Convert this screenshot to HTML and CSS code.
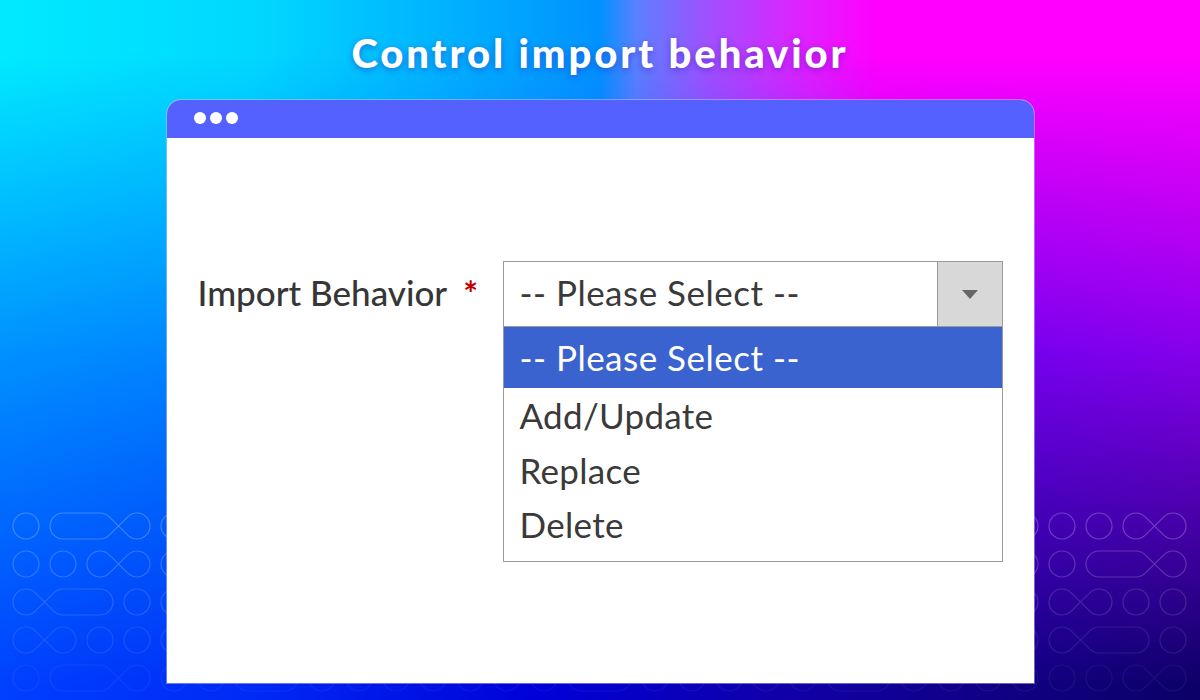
FILE: index.html
```html
<!DOCTYPE html>
<html lang="en">
<head>
<meta charset="utf-8">
<title>Control import behavior</title>
<link rel="stylesheet" href="styles.css">
</head>
<body>
<svg class="pattern" width="1200" height="700" viewBox="0 0 1200 700" aria-hidden="true">
  <defs>
    <circle id="o" r="13"/>
    <path id="inf" d="M9.19,-9.19 L27.81,9.19 A13,13 0 1 0 27.81,-9.19 L9.19,9.19 A13,13 0 1 1 9.19,-9.19 Z"/>
    <path id="px" d="M0,-13 L37,-13 A13,13 0 0 1 46.19,-9.19 L64.81,9.19 A13,13 0 1 0 64.81,-9.19 L46.19,9.19 A13,13 0 0 1 37,13 L0,13 A13,13 0 0 1 0,-13 Z"/>
    <path id="xp" d="M9.19,-9.19 L27.81,9.19 A13,13 0 0 0 37,13 L74,13 A13,13 0 0 0 74,-13 L37,-13 A13,13 0 0 0 27.81,-9.19 L9.19,9.19 A13,13 0 1 1 9.19,-9.19 Z"/>
    <rect id="pill" x="-13" y="-13" width="63" height="26" rx="13"/>
  </defs>
  <g class="row r1" transform="translate(0,526)">
    <use href="#o" x="26"/><use href="#px" x="63"/><use href="#o" x="174"/><use href="#inf" x="211"/><use href="#o" x="285"/><use href="#pill" x="322"/><use href="#o" x="396"/><use href="#inf" x="433"/><use href="#o" x="507"/><use href="#o" x="544"/><use href="#px" x="581"/><use href="#o" x="692"/><use href="#inf" x="729"/><use href="#o" x="803"/><use href="#pill" x="840"/><use href="#o" x="914"/><use href="#o" x="951"/><use href="#o" x="988"/><use href="#o" x="1025"/><use href="#o" x="1062"/><use href="#o" x="1099"/><use href="#inf" x="1136"/>
  </g>
  <g class="row r2" transform="translate(0,564)">
    <use href="#o" x="26"/><use href="#o" x="63"/><use href="#inf" x="100"/><use href="#o" x="174"/><use href="#xp" x="211"/><use href="#o" x="322"/><use href="#o" x="359"/><use href="#inf" x="396"/><use href="#o" x="470"/><use href="#pill" x="507"/><use href="#o" x="581"/><use href="#inf" x="618"/><use href="#o" x="692"/><use href="#o" x="729"/><use href="#px" x="766"/><use href="#o" x="877"/><use href="#inf" x="914"/><use href="#o" x="988"/><use href="#o" x="1025"/><use href="#o" x="1062"/><use href="#px" x="1099"/>
  </g>
  <g class="row r3" transform="translate(0,602)">
    <use href="#xp" x="26"/><use href="#o" x="137"/><use href="#o" x="174"/><use href="#inf" x="211"/><use href="#o" x="285"/><use href="#pill" x="322"/><use href="#o" x="396"/><use href="#o" x="433"/><use href="#xp" x="470"/><use href="#o" x="581"/><use href="#inf" x="618"/><use href="#o" x="692"/><use href="#pill" x="729"/><use href="#o" x="803"/><use href="#o" x="840"/><use href="#inf" x="877"/><use href="#o" x="951"/><use href="#o" x="988"/><use href="#o" x="1025"/><use href="#inf" x="1062"/><use href="#o" x="1136"/><use href="#o" x="1173"/>
  </g>
  <g class="row r4" transform="translate(0,640)">
    <use href="#inf" x="26"/><use href="#o" x="100"/><use href="#o" x="137"/><use href="#o" x="174"/><use href="#px" x="211"/><use href="#o" x="322"/><use href="#inf" x="359"/><use href="#o" x="433"/><use href="#o" x="470"/><use href="#pill" x="507"/><use href="#o" x="581"/><use href="#inf" x="618"/><use href="#o" x="692"/><use href="#o" x="729"/><use href="#xp" x="766"/><use href="#o" x="877"/><use href="#inf" x="914"/><use href="#o" x="988"/><use href="#o" x="1025"/><use href="#xp" x="1062"/><use href="#o" x="1173"/>
  </g>
  <g class="row r5" transform="translate(0,678)">
    <use href="#o" x="26"/><use href="#px" x="63"/><use href="#o" x="174"/><use href="#o" x="211"/><use href="#pill" x="248"/><use href="#o" x="322"/><use href="#o" x="359"/><use href="#inf" x="396"/><use href="#o" x="470"/><use href="#o" x="507"/><use href="#o" x="544"/><use href="#pill" x="581"/><use href="#o" x="655"/><use href="#o" x="692"/><use href="#inf" x="729"/><use href="#o" x="803"/><use href="#pill" x="840"/><use href="#o" x="914"/><use href="#o" x="951"/><use href="#o" x="988"/><use href="#o" x="1025"/><use href="#o" x="1062"/><use href="#o" x="1099"/><use href="#inf" x="1136"/>
  </g>
</svg>

<main class="stage">
  <h1 class="title">Control import behavior</h1>
  <section class="window">
    <div class="titlebar">
      <span class="dot"></span><span class="dot"></span><span class="dot"></span>
    </div>
    <div class="content">
      <div class="field">
        <label class="label">Import Behavior <span class="req">*</span></label>
        <div class="select-wrap">
          <div class="select">
            <span class="value">-- Please Select --</span>
            <span class="arrow"><span class="tri"></span></span>
          </div>
          <ul class="options">
            <li class="option selected">-- Please Select --</li>
            <li class="option">Add/Update</li>
            <li class="option">Replace</li>
            <li class="option">Delete</li>
          </ul>
        </div>
      </div>
    </div>
  </section>
</main>
</body>
</html>
```

FILE: styles.css
```css
* { box-sizing: border-box; }

html, body {
  margin: 0;
  padding: 0;
  width: 1200px;
  height: 700px;
  overflow: hidden;
}

body {
  position: relative;
  font-family: "Lato", "Noto Sans", sans-serif;
  background: linear-gradient(90deg, #00eaff 0%, #00d8ff 21%, #00b0ff 38%, #0092ff 50%, #5a80ff 53%, #a050ff 59%, #e020ff 67%, #ff00ff 73%, #ff00ff 100%);
}

body::before,
body::after {
  content: "";
  position: absolute;
  inset: 0;
  z-index: 0;
}

body::before {
  background: linear-gradient(90deg, #0092ff 0%, #0078ff 30%, #3c50ff 55%, #7000f0 78%, #8600ec 100%);
  -webkit-mask-image: linear-gradient(180deg, transparent 8%, #000 50%);
  mask-image: linear-gradient(180deg, transparent 8%, #000 50%);
}

body::after {
  background: linear-gradient(90deg, #0040ff 0%, #0028f4 22%, #0000d8 45%, #1000a8 65%, #10008a 80%, #0c0066 100%);
  -webkit-mask-image: linear-gradient(180deg, transparent 50%, #000 98%);
  mask-image: linear-gradient(180deg, transparent 50%, #000 98%);
}

.pattern {
  position: absolute;
  left: 0;
  top: 0;
  z-index: 1;
  fill: none;
  stroke: #ffffff;
  stroke-width: 1.2;
}

.row.r1 { stroke-opacity: 0.24; }
.row.r2 { stroke-opacity: 0.2; }
.row.r3 { stroke-opacity: 0.15; }
.row.r4 { stroke-opacity: 0.1; }
.row.r5 { stroke-opacity: 0.06; }

.stage {
  position: relative;
  z-index: 2;
  display: flex;
  flex-direction: column;
  align-items: center;
  padding-top: 30px;
}

.title {
  margin: 0;
  height: 46px;
  font-family: "Lato", sans-serif;
  font-weight: 900;
  font-size: 40px;
  line-height: 46px;
  color: #ffffff;
  letter-spacing: 2.9px;
  text-shadow: 0 2px 6px rgba(60, 20, 170, 0.45);
}

.window {
  margin-top: 24px;
  width: 867px;
  height: 583px;
  display: flex;
  flex-direction: column;
  background: #ffffff;
  border-radius: 14px 14px 0 0;
  overflow: hidden;
  box-shadow: 0 0 0 1px rgba(200, 200, 255, 0.5);
}

.titlebar {
  height: 38px;
  flex: none;
  background: #5561ff;
  display: flex;
  align-items: center;
  gap: 4px;
  padding-left: 27px;
  padding-bottom: 2px;
}

.dot {
  width: 12px;
  height: 12px;
  border-radius: 50%;
  background: #ffffff;
}

.content {
  flex: 1;
  padding: 123px 0 0 31px;
}

.field {
  display: flex;
  align-items: flex-start;
}

.label {
  width: 305px;
  height: 66px;
  line-height: 63px;
  font-size: 35px;
  font-weight: 500;
  color: #363636;
  white-space: nowrap;
}

.req {
  color: #c00000;
  margin-left: 8px;
  font-weight: 700;
}

.select-wrap {
  width: 500px;
  display: flex;
  flex-direction: column;
}

.select {
  height: 66px;
  border: 1px solid #9a9a9a;
  display: flex;
  align-items: stretch;
  background: #ffffff;
}

.value {
  flex: 1;
  padding-left: 16px;
  line-height: 61px;
  font-size: 35px;
  letter-spacing: 0.5px;
  color: #3a3a3a;
}

.arrow {
  width: 65px;
  flex: none;
  border-left: 1px solid #9a9a9a;
  background: #d8d8d8;
  display: flex;
  align-items: center;
  justify-content: center;
}

.tri {
  width: 0;
  height: 0;
  border-left: 8px solid transparent;
  border-right: 8px solid transparent;
  border-top: 9px solid #666666;
}

.options {
  list-style: none;
  margin: 0;
  padding: 0 0 9px;
  border: 1px solid #9a9a9a;
  border-top: none;
  background: #ffffff;
}

.option {
  height: 54.5px;
  line-height: 54.5px;
  padding-left: 16px;
  font-size: 35px;
  letter-spacing: 0.3px;
  color: #3a3a3a;
}

.option.selected {
  height: 61px;
  line-height: 61px;
  letter-spacing: 0.5px;
  background: #3a63cf;
  color: #ffffff;
}
```
